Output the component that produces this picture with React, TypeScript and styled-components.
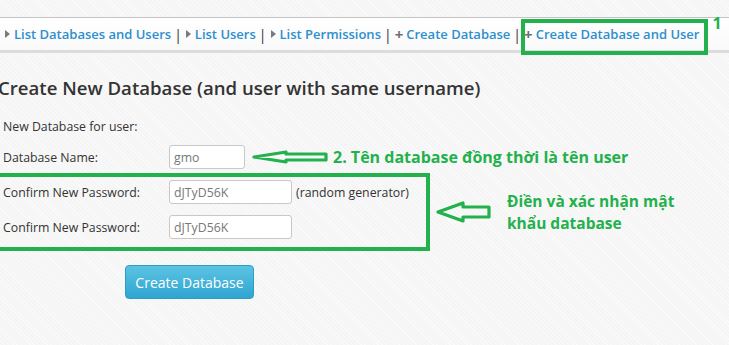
import React from "react";
import styled, { createGlobalStyle } from "styled-components";

const GREEN = "#22b14c";

const GlobalStyle = createGlobalStyle`
  html, body {
    margin: 0;
    padding: 0;
  }
  body {
    background-color: #f5f5f5;
    background-image: repeating-linear-gradient(
      45deg,
      rgba(255, 255, 255, 0.55) 0px,
      rgba(255, 255, 255, 0.55) 1px,
      rgba(0, 0, 0, 0) 1px,
      rgba(0, 0, 0, 0) 3px
    );
    font-family: "Open Sans", "Liberation Sans", sans-serif;
    color: #333;
    overflow: hidden;
  }
`;

const navLinks = [
  { icon: "arrow", label: "List Databases and Users" },
  { icon: "arrow", label: "List Users" },
  { icon: "arrow", label: "List Permissions" },
  { icon: "plus", label: "Create Database" },
  { icon: "plus", label: "Create Database and User", marked: true },
];

const LeftArrow = ({ width, height, head }: { width: number; height: number; head: number }) => {
  const mid = height / 2;
  const t = Math.round(height * 0.22);
  return (
    <svg width={width} height={height} viewBox={`0 0 ${width} ${height}`}>
      <polygon
        points={`2,${mid} ${head},2 ${head},${t + 1} ${width - 2},${t + 1} ${width - 2},${height - t - 1} ${head},${height - t - 1} ${head},${height - 2}`}
        fill="none"
        stroke={GREEN}
        strokeWidth={3.2}
        strokeLinejoin="round"
      />
    </svg>
  );
};

const App = () => {
  return (
    <StyledPage>
      <GlobalStyle />
      <StyledNav>
        {navLinks.map((link, i) => (
          <React.Fragment key={link.label}>
            {i > 0 && <StyledSeparator>|</StyledSeparator>}
            <StyledNavItem $marked={!!link.marked}>
              {link.icon === "arrow" ? <StyledTriangle /> : <StyledPlus>+</StyledPlus>}
              <a>{link.label}</a>
              {link.marked && <StyledStepNumber>1</StyledStepNumber>}
            </StyledNavItem>
          </React.Fragment>
        ))}
      </StyledNav>

      <StyledHeading>Create New Database (and user with same username)</StyledHeading>

      <StyledForm>
        <StyledRow>
          <StyledLabel>New Database for user:</StyledLabel>
        </StyledRow>
        <StyledRow $gap={7}>
          <StyledLabel>Database Name:</StyledLabel>
          <StyledInput $width={76} defaultValue="gmo" />
          <StyledArrowSlot $left={7}>
            <LeftArrow width={76} height={14} head={34} />
          </StyledArrowSlot>
          <StyledNote $left={5} $size={16}>
            2. Tên database đồng thời là tên user
          </StyledNote>
        </StyledRow>

        <StyledGroup>
          <StyledGroupBox>
            <StyledRow>
              <StyledLabel>Confirm New Password:</StyledLabel>
              <StyledInput $width={123} defaultValue="dJTyD56K" />
              <StyledHint>(random generator)</StyledHint>
            </StyledRow>
            <StyledRow $gap={11}>
              <StyledLabel>Confirm New Password:</StyledLabel>
              <StyledInput $width={123} defaultValue="dJTyD56K" />
            </StyledRow>
          </StyledGroupBox>
          <StyledArrowSlot $left={6}>
            <LeftArrow width={55} height={22} head={27} />
          </StyledArrowSlot>
          <StyledNote $left={16} $size={15.5} $width={185}>
            Điền và xác nhận mật khẩu database
          </StyledNote>
        </StyledGroup>

        <StyledButtonRow>
          <StyledButton>Create Database</StyledButton>
        </StyledButtonRow>
      </StyledForm>
    </StyledPage>
  );
};

const StyledPage = styled.div`
  padding-top: 17px;
  width: 729px;
  height: 345px;
  box-sizing: border-box;
`;

const StyledNav = styled.nav`
  display: flex;
  align-items: center;
  height: 32px;
  padding-left: 5px;
  background: linear-gradient(#ffffff, #f9f9f9);
  border-top: 1px solid #c4c4c4;
  border-bottom: 3px solid #dcdcdc;
  font-size: 13px;
  font-weight: 600;
  white-space: nowrap;
`;

const StyledNavItem = styled.span<{ $marked: boolean }>`
  position: relative;
  align-self: stretch;
  flex-shrink: 0;
  display: flex;
  align-items: center;
  gap: 4px;

  a {
    color: #2d8fcd;
    cursor: pointer;
  }

  &::after {
    content: "";
    display: ${(p) => (p.$marked ? "block" : "none")};
    position: absolute;
    left: -4px;
    right: -9px;
    top: 1px;
    bottom: -5px;
    border: 4px solid ${GREEN};
  }
`;

const StyledTriangle = styled.span`
  width: 0;
  height: 0;
  border-top: 4px solid transparent;
  border-bottom: 4px solid transparent;
  border-left: 5px solid #7a7a7a;
`;

const StyledPlus = styled.span`
  color: #6f6f6f;
  font-size: 15px;
  font-weight: 700;
  line-height: 1;
  margin-left: -1px;
  margin-right: -1px;
`;

const StyledSeparator = styled.span`
  flex-shrink: 0;
  color: #333;
  font-weight: 400;
  font-size: 14px;
  margin: 0 4px 0 3px;
`;

const StyledStepNumber = styled.span`
  position: absolute;
  left: calc(100% + 13px);
  top: -6px;
  color: ${GREEN};
  font-size: 16px;
  font-weight: 700;
`;

const StyledHeading = styled.h2`
  margin: 23px 0 0 -2px;
  font-size: 18.6px;
  line-height: 24px;
  font-weight: 600;
  color: #333;
  white-space: nowrap;
`;

const StyledForm = styled.div`
  margin-top: 14px;
  padding-left: 3px;
  font-size: 12.3px;
`;

const StyledRow = styled.div<{ $gap?: number }>`
  display: flex;
  align-items: center;
  height: 24px;
  margin-top: ${(p) => p.$gap ?? 0}px;
`;

const StyledLabel = styled.span`
  width: 166px;
  flex-shrink: 0;
  color: #333;
`;

const StyledInput = styled.input<{ $width: number }>`
  box-sizing: border-box;
  width: ${(p) => p.$width}px;
  height: 24px;
  padding: 0 4px;
  border: 1px solid #c8c8c8;
  border-radius: 3px;
  background: #fff;
  font-family: "Open Sans", "Liberation Sans", sans-serif;
  font-size: 12.3px;
  color: #777;
`;

const StyledHint = styled.span`
  margin-left: 4px;
  color: #333;
`;

const StyledArrowSlot = styled.span<{ $left: number }>`
  display: flex;
  margin-left: ${(p) => p.$left}px;
`;

const StyledNote = styled.span<{ $left: number; $size: number; $width?: number }>`
  margin-left: ${(p) => p.$left}px;
  width: ${(p) => (p.$width ? `${p.$width}px` : "auto")};
  color: ${GREEN};
  font-size: ${(p) => p.$size}px;
  font-weight: 700;
  line-height: 22px;
  white-space: ${(p) => (p.$width ? "normal" : "nowrap")};
`;

const StyledGroup = styled.div`
  display: flex;
  align-items: center;
  margin-top: 4px;
`;

const StyledGroupBox = styled.div`
  width: 423px;
  margin-left: -7px;
  padding: 3px 0 8px 3px;
  border: 4px solid ${GREEN};
  box-sizing: content-box;
`;

const StyledButtonRow = styled.div`
  margin-top: 14px;
  padding-left: 122px;
`;

const StyledButton = styled.button`
  width: 129px;
  height: 34px;
  border: 1px solid #2b9dc8;
  border-radius: 4px;
  background: linear-gradient(#5bc3e2, #2fa5d1);
  color: #fff;
  font-family: "Open Sans", "Liberation Sans", sans-serif;
  font-size: 14px;
  cursor: pointer;
`;

export default App;
